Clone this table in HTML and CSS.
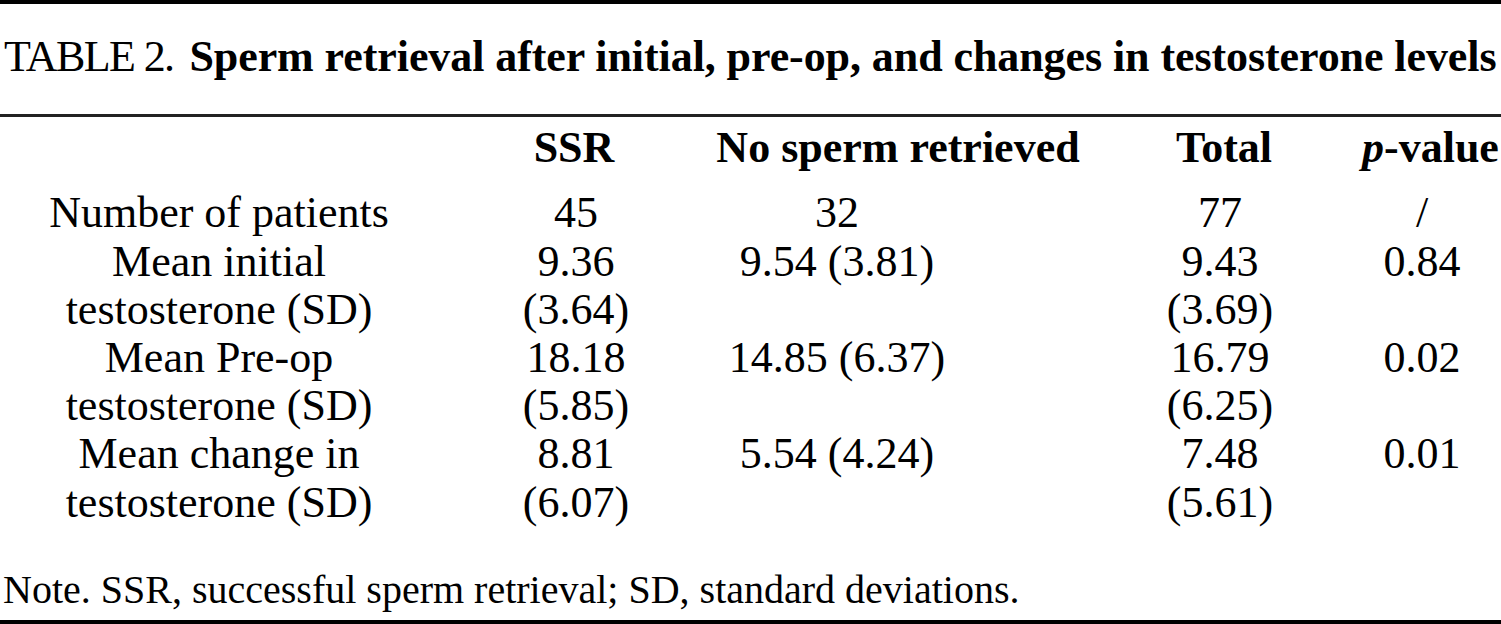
FILE: index.html
```html
<!DOCTYPE html>
<html lang="en">
<head>
<meta charset="utf-8">
<title>Table 2</title>
<link rel="stylesheet" href="styles.css">
</head>
<body>
<div class="page">
  <div class="rule rule-top"></div>
  <div class="caption"><span class="label">TABLE 2.</span><b>Sperm retrieval after initial, pre-op, and changes in testosterone levels</b></div>
  <div class="rule rule-mid"></div>
  <div class="head">
    <div class="h h2">SSR</div>
    <div class="h h3">No sperm retrieved</div>
    <div class="h h4">Total</div>
    <div class="h h5"><i>p</i>-value</div>
  </div>
  <div class="body">
    <div class="c c1">Number of patients</div>
    <div class="c c2">45</div>
    <div class="c c3">32</div>
    <div class="c c4">77</div>
    <div class="c c5">/</div>

    <div class="c c1">Mean initial<br>testosterone (SD)</div>
    <div class="c c2">9.36<br>(3.64)</div>
    <div class="c c3">9.54 (3.81)</div>
    <div class="c c4">9.43<br>(3.69)</div>
    <div class="c c5">0.84</div>

    <div class="c c1">Mean Pre-op<br>testosterone (SD)</div>
    <div class="c c2">18.18<br>(5.85)</div>
    <div class="c c3">14.85 (6.37)</div>
    <div class="c c4">16.79<br>(6.25)</div>
    <div class="c c5">0.02</div>

    <div class="c c1">Mean change in<br>testosterone (SD)</div>
    <div class="c c2">8.81<br>(6.07)</div>
    <div class="c c3">5.54 (4.24)</div>
    <div class="c c4">7.48<br>(5.61)</div>
    <div class="c c5">0.01</div>
  </div>
  <div class="note">Note. SSR, successful sperm retrieval; SD, standard deviations.</div>
  <div class="rule rule-bottom"></div>
</div>
</body>
</html>
```
FILE: styles.css
```css
html, body {
  margin: 0;
  padding: 0;
  background: #fff;
}

.page {
  width: 1501px;
  height: 624px;
  font-family: "Liberation Serif", "Times New Roman", serif;
  font-size: 44px;
  line-height: 48.2px;
  color: #000;
  display: flex;
  flex-direction: column;
  overflow: hidden;
}

.rule {
  background: #000;
  width: 100%;
  flex: none;
}

.rule-top {
  height: 4px;
}

.rule-mid {
  height: 3px;
  background: #222;
  margin-top: 33px;
}

.rule-bottom {
  height: 5px;
  margin-top: 6px;
}

.caption {
  margin-top: 29px;
  padding-left: 4px;
  white-space: nowrap;
}

.caption .label {
  letter-spacing: -1.6px;
  margin-right: 16px;
}

.caption b {
  font-weight: 700;
  letter-spacing: -0.08px;
}

.head {
  display: grid;
  grid-template-columns: 438px 272px 376px 276px 136px;
  margin-top: 7px;
  font-weight: 700;
}

.h {
  text-align: center;
  white-space: nowrap;
}

.h2 { grid-column: 2; }
.h3 { grid-column: 3; }
.h4 { grid-column: 4; }
.h5 { grid-column: 5; }

.body {
  display: grid;
  grid-template-columns: 438px 276px 246px 116px 288px 116px;
  margin-top: 17px;
}

.c {
  text-align: center;
  white-space: nowrap;
}

.c1 { grid-column: 1; }
.c2 { grid-column: 2; }
.c3 { grid-column: 3; }
.c4 { grid-column: 5; }
.c5 { grid-column: 6; }

.note {
  margin-top: 39px;
  padding-left: 3px;
  font-size: 40px;
  white-space: nowrap;
}
```
